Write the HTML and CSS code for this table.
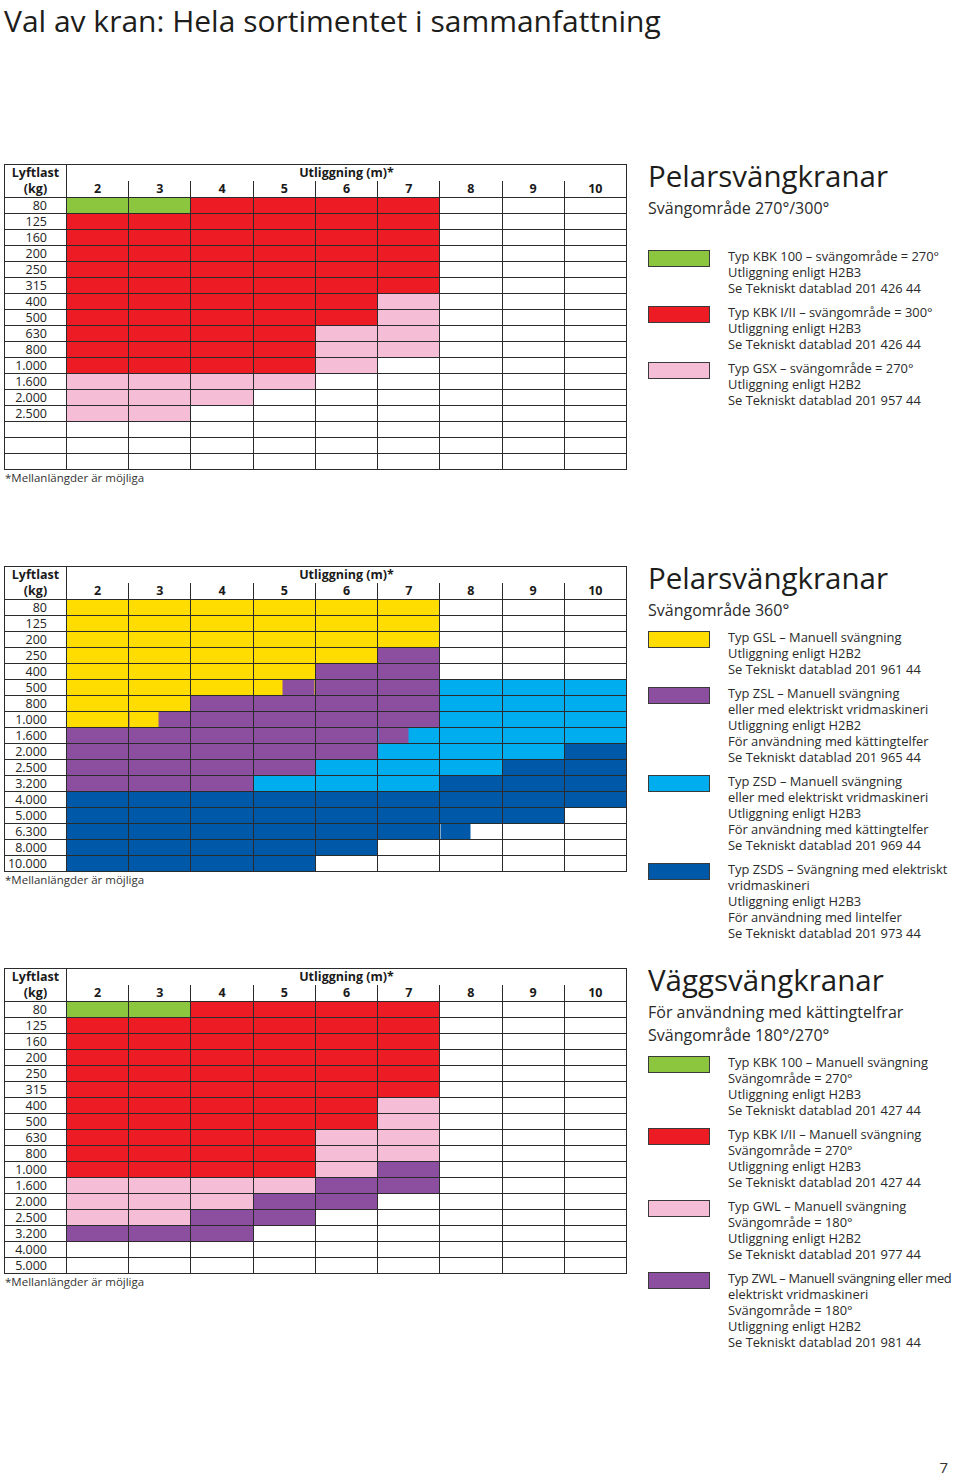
FILE: index.html
```html
<!DOCTYPE html>
<html lang="sv">
<head>
<meta charset="utf-8">
<title>Val av kran</title>
<link rel="stylesheet" href="styles.css">
</head>
<body>
<h1 class="title">Val av kran: Hela sortimentet i sammanfattning</h1>

<main class="sheet">

<section class="section">
  <div class="chart">
    <table class="grid">
      <colgroup><col class="c-lab"><col span="9"></colgroup>
      <thead>
        <tr class="h1"><th class="lab" rowspan="2">Lyftlast<br>(kg)</th><th class="util" colspan="9">Utliggning (m)*</th></tr>
        <tr class="h2"><th>2</th><th>3</th><th>4</th><th>5</th><th>6</th><th>7</th><th>8</th><th>9</th><th>10</th></tr>
      </thead>
      <tbody>
        <tr><th>80</th><td class="g"></td><td class="g"></td><td class="r"></td><td class="r"></td><td class="r"></td><td class="r"></td><td></td><td></td><td></td></tr>
        <tr><th>125</th><td class="r"></td><td class="r"></td><td class="r"></td><td class="r"></td><td class="r"></td><td class="r"></td><td></td><td></td><td></td></tr>
        <tr><th>160</th><td class="r"></td><td class="r"></td><td class="r"></td><td class="r"></td><td class="r"></td><td class="r"></td><td></td><td></td><td></td></tr>
        <tr><th>200</th><td class="r"></td><td class="r"></td><td class="r"></td><td class="r"></td><td class="r"></td><td class="r"></td><td></td><td></td><td></td></tr>
        <tr><th>250</th><td class="r"></td><td class="r"></td><td class="r"></td><td class="r"></td><td class="r"></td><td class="r"></td><td></td><td></td><td></td></tr>
        <tr><th>315</th><td class="r"></td><td class="r"></td><td class="r"></td><td class="r"></td><td class="r"></td><td class="r"></td><td></td><td></td><td></td></tr>
        <tr><th>400</th><td class="r"></td><td class="r"></td><td class="r"></td><td class="r"></td><td class="r"></td><td class="p"></td><td></td><td></td><td></td></tr>
        <tr><th>500</th><td class="r"></td><td class="r"></td><td class="r"></td><td class="r"></td><td class="r"></td><td class="p"></td><td></td><td></td><td></td></tr>
        <tr><th>630</th><td class="r"></td><td class="r"></td><td class="r"></td><td class="r"></td><td class="p"></td><td class="p"></td><td></td><td></td><td></td></tr>
        <tr><th>800</th><td class="r"></td><td class="r"></td><td class="r"></td><td class="r"></td><td class="p"></td><td class="p"></td><td></td><td></td><td></td></tr>
        <tr><th>1.000</th><td class="r"></td><td class="r"></td><td class="r"></td><td class="r"></td><td class="p"></td><td></td><td></td><td></td><td></td></tr>
        <tr><th>1.600</th><td class="p"></td><td class="p"></td><td class="p"></td><td class="p"></td><td></td><td></td><td></td><td></td><td></td></tr>
        <tr><th>2.000</th><td class="p"></td><td class="p"></td><td class="p"></td><td></td><td></td><td></td><td></td><td></td><td></td></tr>
        <tr><th>2.500</th><td class="p"></td><td class="p"></td><td></td><td></td><td></td><td></td><td></td><td></td><td></td></tr>
        <tr><th></th><td></td><td></td><td></td><td></td><td></td><td></td><td></td><td></td><td></td></tr>
        <tr><th></th><td></td><td></td><td></td><td></td><td></td><td></td><td></td><td></td><td></td></tr>
        <tr><th></th><td></td><td></td><td></td><td></td><td></td><td></td><td></td><td></td><td></td></tr>
      </tbody>
    </table>
    <p class="note">*Mellanlängder är möjliga</p>
  </div>
  <div class="legend">
    <h2>Pelarsvängkranar</h2>
    <p class="sub">Svängområde 270°/300°</p>
    <div class="items wide">
      <div class="item"><span class="sw g"></span><p>Typ KBK 100 – svängområde = 270°<br>Utliggning enligt H2B3<br>Se Tekniskt datablad 201 426 44</p></div>
      <div class="item"><span class="sw r"></span><p>Typ KBK I/II – svängområde = 300°<br>Utliggning enligt H2B3<br>Se Tekniskt datablad 201 426 44</p></div>
      <div class="item"><span class="sw p"></span><p>Typ GSX – svängområde = 270°<br>Utliggning enligt H2B2<br>Se Tekniskt datablad 201 957 44</p></div>
    </div>
  </div>
</section>

<section class="section">
  <div class="chart">
    <table class="grid">
      <colgroup><col class="c-lab"><col span="9"></colgroup>
      <thead>
        <tr class="h1"><th class="lab" rowspan="2">Lyftlast<br>(kg)</th><th class="util" colspan="9">Utliggning (m)*</th></tr>
        <tr class="h2"><th>2</th><th>3</th><th>4</th><th>5</th><th>6</th><th>7</th><th>8</th><th>9</th><th>10</th></tr>
      </thead>
      <tbody>
        <tr><th>80</th><td class="y"></td><td class="y"></td><td class="y"></td><td class="y"></td><td class="y"></td><td class="y"></td><td></td><td></td><td></td></tr>
        <tr><th>125</th><td class="y"></td><td class="y"></td><td class="y"></td><td class="y"></td><td class="y"></td><td class="y"></td><td></td><td></td><td></td></tr>
        <tr><th>200</th><td class="y"></td><td class="y"></td><td class="y"></td><td class="y"></td><td class="y"></td><td class="y"></td><td></td><td></td><td></td></tr>
        <tr><th>250</th><td class="y"></td><td class="y"></td><td class="y"></td><td class="y"></td><td class="y"></td><td class="v"></td><td></td><td></td><td></td></tr>
        <tr><th>400</th><td class="y"></td><td class="y"></td><td class="y"></td><td class="y"></td><td class="v"></td><td class="v"></td><td></td><td></td><td></td></tr>
        <tr><th>500</th><td class="y"></td><td class="y"></td><td class="y"></td><td class="yv"></td><td class="v"></td><td class="v"></td><td class="c"></td><td class="c"></td><td class="c"></td></tr>
        <tr><th>800</th><td class="y"></td><td class="y"></td><td class="v"></td><td class="v"></td><td class="v"></td><td class="v"></td><td class="c"></td><td class="c"></td><td class="c"></td></tr>
        <tr><th>1.000</th><td class="y"></td><td class="yv"></td><td class="v"></td><td class="v"></td><td class="v"></td><td class="v"></td><td class="c"></td><td class="c"></td><td class="c"></td></tr>
        <tr><th>1.600</th><td class="v"></td><td class="v"></td><td class="v"></td><td class="v"></td><td class="v"></td><td class="vc"></td><td class="c"></td><td class="c"></td><td class="c"></td></tr>
        <tr><th>2.000</th><td class="v"></td><td class="v"></td><td class="v"></td><td class="v"></td><td class="v"></td><td class="c"></td><td class="c"></td><td class="c"></td><td class="b"></td></tr>
        <tr><th>2.500</th><td class="v"></td><td class="v"></td><td class="v"></td><td class="v"></td><td class="c"></td><td class="c"></td><td class="c"></td><td class="b"></td><td class="b"></td></tr>
        <tr><th>3.200</th><td class="v"></td><td class="v"></td><td class="v"></td><td class="c"></td><td class="c"></td><td class="c"></td><td class="b"></td><td class="b"></td><td class="b"></td></tr>
        <tr><th>4.000</th><td class="b"></td><td class="b"></td><td class="b"></td><td class="b"></td><td class="b"></td><td class="b"></td><td class="b"></td><td class="b"></td><td class="b"></td></tr>
        <tr><th>5.000</th><td class="b"></td><td class="b"></td><td class="b"></td><td class="b"></td><td class="b"></td><td class="b"></td><td class="b"></td><td class="b"></td><td></td></tr>
        <tr><th>6.300</th><td class="b"></td><td class="b"></td><td class="b"></td><td class="b"></td><td class="b"></td><td class="b"></td><td class="bw"></td><td></td><td></td></tr>
        <tr><th>8.000</th><td class="b"></td><td class="b"></td><td class="b"></td><td class="b"></td><td class="b"></td><td></td><td></td><td></td><td></td></tr>
        <tr><th>10.000</th><td class="b"></td><td class="b"></td><td class="b"></td><td class="b"></td><td></td><td></td><td></td><td></td><td></td></tr>
      </tbody>
    </table>
    <p class="note">*Mellanlängder är möjliga</p>
  </div>
  <div class="legend">
    <h2>Pelarsvängkranar</h2>
    <p class="sub">Svängområde 360°</p>
    <div class="items">
      <div class="item"><span class="sw y"></span><p>Typ GSL – Manuell svängning<br>Utliggning enligt H2B2<br>Se Tekniskt datablad 201 961 44</p></div>
      <div class="item"><span class="sw v"></span><p>Typ ZSL – Manuell svängning<br>eller med elektriskt vridmaskineri<br>Utliggning enligt H2B2<br>För användning med kättingtelfer<br>Se Tekniskt datablad 201 965 44</p></div>
      <div class="item"><span class="sw c"></span><p>Typ ZSD – Manuell svängning<br>eller med elektriskt vridmaskineri<br>Utliggning enligt H2B3<br>För användning med kättingtelfer<br>Se Tekniskt datablad 201 969 44</p></div>
      <div class="item"><span class="sw b"></span><p>Typ ZSDS – Svängning med elektriskt<br>vridmaskineri<br>Utliggning enligt H2B3<br>För användning med lintelfer<br>Se Tekniskt datablad 201 973 44</p></div>
    </div>
  </div>
</section>

<section class="section">
  <div class="chart">
    <table class="grid">
      <colgroup><col class="c-lab"><col span="9"></colgroup>
      <thead>
        <tr class="h1"><th class="lab" rowspan="2">Lyftlast<br>(kg)</th><th class="util" colspan="9">Utliggning (m)*</th></tr>
        <tr class="h2"><th>2</th><th>3</th><th>4</th><th>5</th><th>6</th><th>7</th><th>8</th><th>9</th><th>10</th></tr>
      </thead>
      <tbody>
        <tr><th>80</th><td class="g"></td><td class="g"></td><td class="r"></td><td class="r"></td><td class="r"></td><td class="r"></td><td></td><td></td><td></td></tr>
        <tr><th>125</th><td class="r"></td><td class="r"></td><td class="r"></td><td class="r"></td><td class="r"></td><td class="r"></td><td></td><td></td><td></td></tr>
        <tr><th>160</th><td class="r"></td><td class="r"></td><td class="r"></td><td class="r"></td><td class="r"></td><td class="r"></td><td></td><td></td><td></td></tr>
        <tr><th>200</th><td class="r"></td><td class="r"></td><td class="r"></td><td class="r"></td><td class="r"></td><td class="r"></td><td></td><td></td><td></td></tr>
        <tr><th>250</th><td class="r"></td><td class="r"></td><td class="r"></td><td class="r"></td><td class="r"></td><td class="r"></td><td></td><td></td><td></td></tr>
        <tr><th>315</th><td class="r"></td><td class="r"></td><td class="r"></td><td class="r"></td><td class="r"></td><td class="r"></td><td></td><td></td><td></td></tr>
        <tr><th>400</th><td class="r"></td><td class="r"></td><td class="r"></td><td class="r"></td><td class="r"></td><td class="p"></td><td></td><td></td><td></td></tr>
        <tr><th>500</th><td class="r"></td><td class="r"></td><td class="r"></td><td class="r"></td><td class="r"></td><td class="p"></td><td></td><td></td><td></td></tr>
        <tr><th>630</th><td class="r"></td><td class="r"></td><td class="r"></td><td class="r"></td><td class="p"></td><td class="p"></td><td></td><td></td><td></td></tr>
        <tr><th>800</th><td class="r"></td><td class="r"></td><td class="r"></td><td class="r"></td><td class="p"></td><td class="p"></td><td></td><td></td><td></td></tr>
        <tr><th>1.000</th><td class="r"></td><td class="r"></td><td class="r"></td><td class="r"></td><td class="p"></td><td class="v"></td><td></td><td></td><td></td></tr>
        <tr><th>1.600</th><td class="p"></td><td class="p"></td><td class="p"></td><td class="p"></td><td class="v"></td><td class="v"></td><td></td><td></td><td></td></tr>
        <tr><th>2.000</th><td class="p"></td><td class="p"></td><td class="p"></td><td class="v"></td><td class="v"></td><td></td><td></td><td></td><td></td></tr>
        <tr><th>2.500</th><td class="p"></td><td class="p"></td><td class="v"></td><td class="v"></td><td></td><td></td><td></td><td></td><td></td></tr>
        <tr><th>3.200</th><td class="v"></td><td class="v"></td><td class="v"></td><td></td><td></td><td></td><td></td><td></td><td></td></tr>
        <tr><th>4.000</th><td></td><td></td><td></td><td></td><td></td><td></td><td></td><td></td><td></td></tr>
        <tr><th>5.000</th><td></td><td></td><td></td><td></td><td></td><td></td><td></td><td></td><td></td></tr>
      </tbody>
    </table>
    <p class="note">*Mellanlängder är möjliga</p>
  </div>
  <div class="legend">
    <h2>Väggsvängkranar</h2>
    <p class="sub">För användning med kättingtelfrar</p>
    <p class="sub sub-next">Svängområde 180°/270°</p>
    <div class="items">
      <div class="item"><span class="sw g"></span><p>Typ KBK 100 – Manuell svängning<br>Svängområde = 270°<br>Utliggning enligt H2B3<br>Se Tekniskt datablad 201 427 44</p></div>
      <div class="item"><span class="sw r"></span><p>Typ KBK I/II – Manuell svängning<br>Svängområde = 270°<br>Utliggning enligt H2B3<br>Se Tekniskt datablad 201 427 44</p></div>
      <div class="item"><span class="sw p"></span><p>Typ GWL – Manuell svängning<br>Svängområde = 180°<br>Utliggning enligt H2B2<br>Se Tekniskt datablad 201 977 44</p></div>
      <div class="item"><span class="sw v"></span><p><span class="tight">Typ ZWL – Manuell svängning eller med</span><br>elektriskt vridmaskineri<br>Svängområde = 180°<br>Utliggning enligt H2B2<br>Se Tekniskt datablad 201 981 44</p></div>
    </div>
  </div>
</section>

</main>

<footer class="pageno">7</footer>
</body>
</html>
```

FILE: styles.css
```css
* { box-sizing: border-box; }

body {
  margin: 0;
  font-family: "Open Sans", "Noto Sans", sans-serif;
  color: #222;
  background: #fff;
}

.title {
  margin: 0;
  padding-left: 4px;
  font-size: 30px;
  line-height: 41px;
  font-weight: 400;
  color: #1d1d1b;
}

.sheet {
  margin-top: 123px;
}

.section {
  display: flex;
  align-items: flex-start;
  gap: 21px;
  height: 402px;
  padding-left: 4px;
}

.chart {
  flex: none;
  width: 623px;
}

.grid {
  width: 623px;
  border-collapse: collapse;
  table-layout: fixed;
}

.c-lab { width: 62px; }

.grid tr { height: 16px; }

.grid th,
.grid td {
  border: 1px solid #2b2b2b;
  padding: 0;
  font-size: 12.5px;
  line-height: 14px;
  color: #222;
}

.grid tbody th {
  font-weight: 400;
  text-align: right;
  padding-right: 19px;
  background: #fff;
}

.grid thead th {
  font-weight: 700;
  text-align: center;
  line-height: 16px;
  color: #1a1a1a;
}

.grid .util {
  border-bottom: none;
  vertical-align: top;
}

.grid .h2 th {
  border-top: none;
}

.note {
  margin: 0;
  padding-left: 1px;
  font-size: 11.5px;
  line-height: 16px;
  color: #333;
}

/* fills */
.g { background: #8cc63f; }
.r { background: #ed1c24; }
.p { background: #f6bdd6; }
.y { background: #ffdd00; }
.v { background: #8c4f9f; }
.c { background: #00adee; }
.b { background: #0058a8; }
.yv { background: linear-gradient(to right, #ffdd00 48%, #8c4f9f 48%); }
.vc { background: linear-gradient(to right, #8c4f9f 49%, #00adee 49%); }
.bw { background: linear-gradient(to right, #0058a8 49%, #fff 49%); }

/* legend */
.legend {
  flex: 1;
  min-width: 0;
}

.legend h2 {
  margin: 0;
  font-size: 29.5px;
  line-height: 24px;
  font-weight: 400;
  color: #1d1d1b;
}

.sub {
  margin: 9px 0 0;
  font-size: 16px;
  line-height: 22px;
  color: #2a2a2a;
  white-space: nowrap;
}

.sub-next { margin-top: 1px; }

.items {
  margin-top: 8px;
  display: flex;
  flex-direction: column;
  gap: 8px;
}

.items.wide { margin-top: 29px; }

.item {
  display: flex;
  align-items: flex-start;
  gap: 18px;
}

.sw {
  flex: none;
  width: 62px;
  height: 17px;
  margin-top: 2px;
  border: 1px solid #3a3a3a;
}

.item p {
  margin: 0;
  font-size: 12.9px;
  line-height: 16px;
  color: #2a2a2a;
  white-space: nowrap;
}

.item .tight {
  letter-spacing: -0.35px;
}

.pageno {
  margin-top: 88px;
  padding-right: 12px;
  text-align: right;
  font-size: 15px;
  line-height: 18px;
  color: #333;
}
```
